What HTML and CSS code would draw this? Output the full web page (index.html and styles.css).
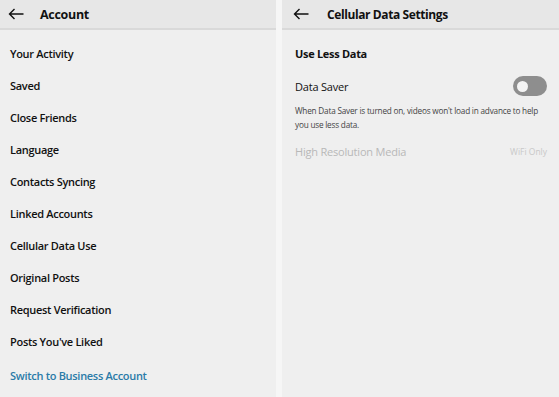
FILE: index.html
```html
<!DOCTYPE html>
<html lang="en">
<head>
  <meta charset="UTF-8">
  <meta name="viewport" content="width=device-width, initial-scale=1.0">
  <title>Account Settings</title>
  <link rel="stylesheet" href="styles.css">
</head>
<body>

<div class="screens">
  <div class="panel left">
    <div class="topbar">
      <svg class="back" width="16" height="12" viewBox="0 0 16 12"><path d="M15.5 6H1.5M6.5 1L1.5 6l5 5" fill="none" stroke="#111" stroke-width="1.4"/></svg>
      <span class="title">Account</span>
    </div>
    <ul class="menu">
      <li>Your Activity</li>
      <li>Saved</li>
      <li>Close Friends</li>
      <li>Language</li>
      <li>Contacts Syncing</li>
      <li>Linked Accounts</li>
      <li>Cellular Data Use</li>
      <li>Original Posts</li>
      <li>Request Verification</li>
      <li>Posts You've Liked</li>
      <li class="link">Switch to Business Account</li>
    </ul>
  </div>

  <div class="panel right">
    <div class="topbar">
      <svg class="back" width="16" height="12" viewBox="0 0 16 12"><path d="M15.5 6H1.5M6.5 1L1.5 6l5 5" fill="none" stroke="#111" stroke-width="1.4"/></svg>
      <span class="title">Cellular Data Settings</span>
    </div>
    <div class="settings">
      <div class="section">Use Less Data</div>
      <div class="row">
        <span class="label">Data Saver</span>
        <span class="toggle"><span class="knob"></span></span>
      </div>
      <p class="hint">When Data Saver is turned on, videos won't load in advance to help you use less data.</p>
      <div class="row disabled">
        <span class="label">High Resolution Media</span>
        <span class="value">WiFi Only</span>
      </div>
    </div>
  </div>
</div>

</body>
</html>
```

FILE: styles.css
```css
body {
  margin: 0;
  background: #f6f6f6;
  font-family: 'Open Sans', Arial, sans-serif;
  color: #111;
}
.screens {
  display: flex;
  gap: 6px;
  height: 397px;
  overflow: hidden;
}
.panel {
  background: #efefef;
  display: flex;
  flex-direction: column;
}
.left {
  width: 276px;
}
.right {
  flex: 1;
}
.topbar {
  height: 28px;
  flex-shrink: 0;
  background: #e7e7e7;
  border-bottom: 2px solid #d9d9d9;
  display: flex;
  align-items: center;
}
.back {
  margin-left: 8px;
}
.right .back {
  margin-left: 11px;
}
.title {
  font-weight: 700;
  font-size: 12.5px;
  margin-left: 16px;
  letter-spacing: -0.3px;
}
.right .title {
  font-size: 12px;
  margin-left: 18px;
  letter-spacing: -0.4px;
}
.menu {
  list-style: none;
  margin: 0;
  padding: 14px 0 0 10px;
}
.menu li {
  height: 32px;
  line-height: 20px;
  font-size: 11px;
  font-weight: 600;
  letter-spacing: -0.3px;
}
.menu .link {
  color: #2a7ba8;
  margin-top: 2px;
  height: 20px;
}
.settings {
  padding: 14px 12px 0 13px;
}
.section {
  font-size: 11px;
  font-weight: 700;
  line-height: 20px;
  letter-spacing: -0.3px;
}
.row {
  display: flex;
  align-items: center;
  justify-content: space-between;
  height: 26px;
  margin-top: 9px;
}
.label {
  font-size: 11px;
  letter-spacing: -0.2px;
}
.toggle {
  width: 34px;
  height: 20px;
  border-radius: 10px;
  background: #8e8e8e;
  display: flex;
  align-items: center;
  padding-left: 4px;
  box-sizing: border-box;
}
.knob {
  width: 11px;
  height: 11px;
  border-radius: 50%;
  background: #f4f4f4;
}
.hint {
  margin: 5px 0 0;
  font-size: 8.2px;
  line-height: 14px;
  color: #444;
  letter-spacing: -0.2px;
}
.disabled {
  margin-top: 6px;
}
.disabled .label {
  color: #b8b8b8;
}
.value {
  font-size: 8.5px;
  color: #c8c8c8;
}
```
